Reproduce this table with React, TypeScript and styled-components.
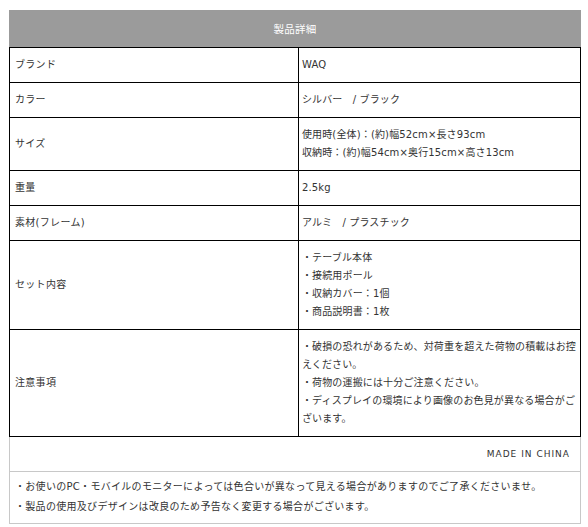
import React from "react";
import styled, { createGlobalStyle } from "styled-components";

type SpecRow = {
  label: string;
  lines: string[];
};

const specs: SpecRow[] = [
  { label: "ブランド", lines: ["WAQ"] },
  { label: "カラー", lines: ["シルバー　/ ブラック"] },
  {
    label: "サイズ",
    lines: ["使用時(全体)：(約)幅52cm×長さ93cm", "収納時：(約)幅54cm×奥行15cm×高さ13cm"],
  },
  { label: "重量", lines: ["2.5kg"] },
  { label: "素材(フレーム)", lines: ["アルミ　/ プラスチック"] },
  {
    label: "セット内容",
    lines: ["・テーブル本体", "・接続用ポール", "・収納カバー：1個", "・商品説明書：1枚"],
  },
  {
    label: "注意事項",
    lines: [
      "・破損の恐れがあるため、対荷重を超えた荷物の積載はお控えください。",
      "・荷物の運搬には十分ご注意ください。",
      "・ディスプレイの環境により画像のお色見が異なる場合がございます。",
    ],
  },
];

const notes = [
  "・お使いのPC・モバイルのモニターによっては色合いが異なって見える場合がありますのでご了承くださいませ。",
  "・製品の使用及びデザインは改良のため予告なく変更する場合がございます。",
];

const App = () => {
  return (
    <>
      <GlobalStyle />
      <Page>
        <Header>製品詳細</Header>
        <SpecTable>
          <tbody>
            {specs.map((row) => (
              <tr key={row.label}>
                <LabelCell>{row.label}</LabelCell>
                <ValueCell>
                  {row.lines.map((line) => (
                    <Line key={line}>{line}</Line>
                  ))}
                </ValueCell>
              </tr>
            ))}
          </tbody>
        </SpecTable>
        <Origin>MADE IN CHINA</Origin>
        <Notes>
          {notes.map((note) => (
            <Line key={note}>{note}</Line>
          ))}
        </Notes>
      </Page>
    </>
  );
};

export default App;

const GlobalStyle = createGlobalStyle`
  body {
    margin: 0;
    background: #fff;
    font-family: "DejaVu Sans", "Noto Sans CJK JP", sans-serif;
    color: #333;
  }
`;

const Page = styled.div`
  width: 572px;
  padding: 10px 0 0 9px;
  font-size: 10px;
  letter-spacing: 0.3px;
`;

const Header = styled.div`
  height: 37px;
  background: #9b9b9b;
  color: #fff;
  display: flex;
  align-items: center;
  justify-content: center;
  font-size: 10.5px;
`;

const SpecTable = styled.table`
  width: 572px;
  border-collapse: collapse;
  table-layout: fixed;
  border: 1px solid #000;
`;

const LabelCell = styled.td`
  width: 50%;
  border: 1px solid #000;
  padding: 8px 5px;
  line-height: 18px;
  vertical-align: middle;
`;

const ValueCell = styled.td`
  width: 50%;
  border: 1px solid #000;
  padding: 8px 0 8px 3px;
  line-height: 18px;
  letter-spacing: 0.15px;
  vertical-align: middle;
`;

const Line = styled.div``;

const Origin = styled.div`
  height: 34px;
  border: 1px solid #c8c8c8;
  border-top: none;
  display: flex;
  align-items: center;
  justify-content: flex-end;
  padding-right: 10px;
  font-size: 9px;
  letter-spacing: 1px;
`;

const Notes = styled.div`
  border: 1px solid #c8c8c8;
  border-top: none;
  padding: 5px 5px 6px;
  line-height: 20px;
`;
